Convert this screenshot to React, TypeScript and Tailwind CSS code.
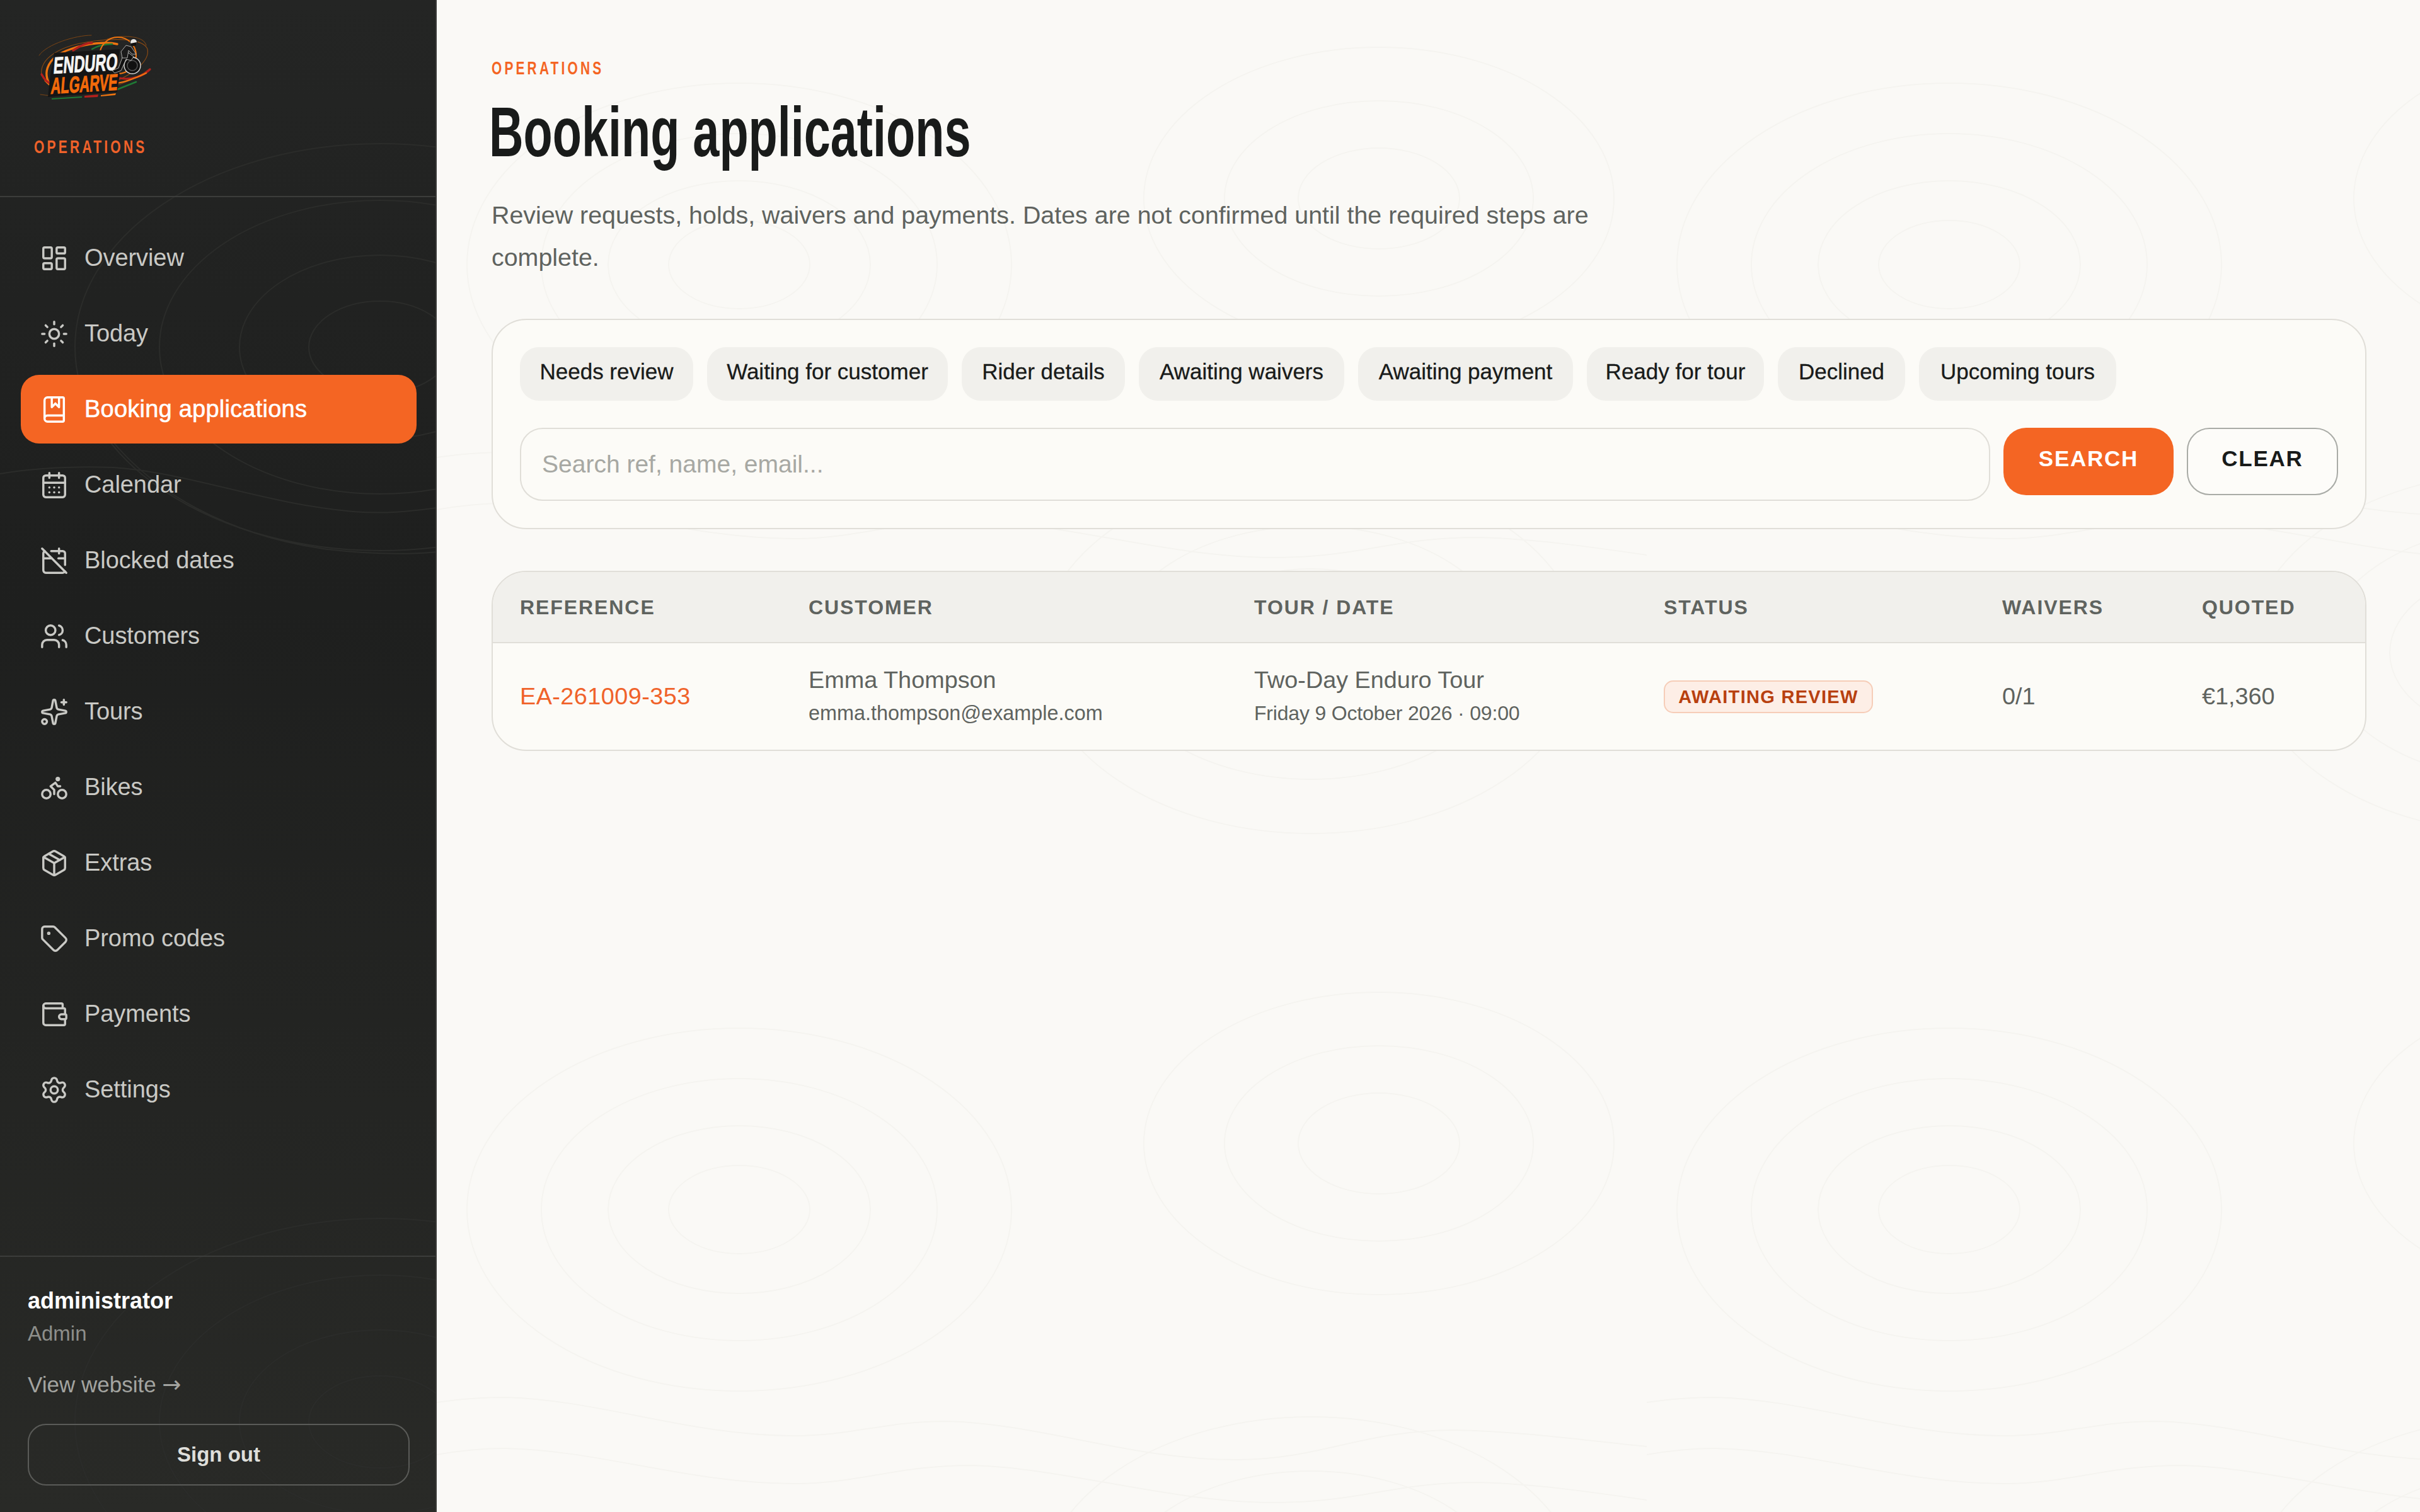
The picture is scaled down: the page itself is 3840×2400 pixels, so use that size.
import React from "react";
import { LayoutDashboard, Sun, BookMarked, CalendarDays, CalendarOff, Users, Sparkles, Bike, Package, Tag, Wallet, Settings } from "lucide-react";

const nav = [
  { label: "Overview", Icon: LayoutDashboard },
  { label: "Today", Icon: Sun },
  { label: "Booking applications", Icon: BookMarked, active: true },
  { label: "Calendar", Icon: CalendarDays },
  { label: "Blocked dates", Icon: CalendarOff },
  { label: "Customers", Icon: Users },
  { label: "Tours", Icon: Sparkles },
  { label: "Bikes", Icon: Bike },
  { label: "Extras", Icon: Package },
  { label: "Promo codes", Icon: Tag },
  { label: "Payments", Icon: Wallet },
  { label: "Settings", Icon: Settings },
];

const chips = [
  { label: "Needs review", w: "w-[275px]" },
  { label: "Waiting for customer", w: "w-[382px]" },
  { label: "Rider details", w: "w-[259px]" },
  { label: "Awaiting waivers", w: "w-[326px]" },
  { label: "Awaiting payment", w: "w-[341px]" },
  { label: "Ready for tour", w: "w-[281px]" },
  { label: "Declined", w: "w-[202px]" },
  { label: "Upcoming tours", w: "w-[313px]" },
];

function Rings({ cx, cy, radii }: { cx: number; cy: number; radii: number[][] }) {
  return (
    <>
      {radii.map(([rx, ry]) => (
        <ellipse key={rx} cx={cx} cy={cy} rx={rx} ry={ry} />
      ))}
    </>
  );
}

function MainPattern() {
  return (
    <svg className="absolute inset-0 w-full h-full pointer-events-none" aria-hidden="true">
      <defs>
        <pattern id="contour" width="1920" height="1500" patternUnits="userSpaceOnUse">
          <g fill="none" stroke="#f5f4f0" strokeWidth="2">
            <Rings cx={480} cy={420} radii={[[432, 288], [314, 208], [208, 133], [112, 70]]} />
            <Rings cx={1495} cy={315} radii={[[373, 240], [245, 155], [128, 80]]} />
            <Rings cx={1387} cy={1036} radii={[[432, 287], [314, 201], [208, 133], [112, 70]]} />
            <path d="M0 726 C40 720 70 718 109 718 C260 722 400 779 568 779 C660 779 710 756 810 756 C960 760 1100 817 1270 817 C1400 817 1470 770 1614 770 C1720 772 1810 785 1920 796" />
            <path d="M0 809 C40 802 70 799 109 799 C260 802 400 855 568 855 C670 855 730 826 849 826 C1000 830 1160 885 1333 885 C1460 885 1520 853 1652 853 C1740 855 1830 868 1920 881" />
          </g>
        </pattern>
      </defs>
      <rect width="100%" height="100%" fill="url(#contour)" />
    </svg>
  );
}

function SidebarPattern() {
  return (
    <svg className="absolute inset-0 w-full h-full pointer-events-none" aria-hidden="true">
      <g fill="none" stroke="#2b2c2a" strokeWidth="2">
        <Rings cx={603} cy={551} radii={[[484, 323], [350, 233], [223, 146], [113, 73]]} />
        <Rings cx={603} cy={2257} radii={[[484, 323], [350, 233], [223, 146], [113, 73]]} />
        <path d="M0 752 C60 742 120 740 180 742 C300 750 420 800 560 812 C610 816 650 812 693 806" />
        <path d="M170 690 C240 780 360 850 520 872 C590 880 650 880 693 876" />
      </g>
    </svg>
  );
}

function Logo() {
  return (
    <svg viewBox="40 40 220 130" className="w-[220px] h-[130px] block" aria-label="Enduro Algarve">
      <g fill="none" strokeLinecap="round">
        <path d="M66 120 C62 94 92 72 150 65 C190 60 228 62 234 78 C238 96 212 118 180 130" stroke="#8a4a14" strokeWidth="1.2" />
        <path d="M62 88 C74 70 120 56 145 56" stroke="#7a4415" strokeWidth="1" />
        <path d="M170 62 C200 54 228 58 232 72" stroke="#7a4415" strokeWidth="1.2" />
        <path d="M64 150 C110 158 200 140 236 110" stroke="#7a4415" strokeWidth="1" />
        <path d="M84 140 C66 122 70 92 112 78 C140 68 170 66 186 70" stroke="#ee7410" strokeWidth="3.4" />
        <path d="M72 128 C88 146 104 144 120 146" stroke="#ee7410" strokeWidth="3" />
        <path d="M66 118 C70 126 76 132 84 134" stroke="#b3201c" strokeWidth="3.4" />
        <path d="M116 80 C128 72 138 68 146 68" stroke="#b3201c" strokeWidth="3.4" />
        <path d="M146 78 C156 72 166 70 178 70" stroke="#1f7a35" strokeWidth="2.4" />
        <circle cx="187" cy="88" r="29" stroke="#ee7410" strokeWidth="2.2" />
        <path d="M190 124 C210 128 228 120 238 110" stroke="#b3201c" strokeWidth="3.2" />
        <path d="M186 132 C200 130 215 124 232 116" stroke="#ee7410" strokeWidth="2.4" />
        <path d="M186 142 C196 138 206 134 216 130" stroke="#1f7a35" strokeWidth="2.6" />
      </g>
      <path d="M80 118 L86 84 L190 78 L186 108 L190 118 L186 146 L76 154 Z" fill="#151515" />
      <text transform="translate(84 117) rotate(-3.5) skewX(-8)" textLength="102" lengthAdjust="spacingAndGlyphs" fontFamily="'Liberation Sans', sans-serif" fontWeight="700" fontSize="37" fill="#f4f4f2" stroke="#f4f4f2" strokeWidth="0.9">ENDURO</text>
      <text transform="translate(80 149) rotate(-3.5) skewX(-8)" textLength="106" lengthAdjust="spacingAndGlyphs" fontFamily="'Liberation Sans', sans-serif" fontWeight="700" fontSize="36" fill="#f26a0a" stroke="#f26a0a" strokeWidth="1.1">ALGARVE</text>
      <path d="M82 156 L130 153 L130 155 L82 158 Z" fill="#1f7a35" />
      <path d="M134 152 L156 150 L155 154 L134 155 Z" fill="#b3201c" />
      <path d="M160 151 L184 148 L183 151 L160 153 Z" fill="#ee7410" />
      <g>
        <circle cx="210" cy="104" r="13" fill="#111" stroke="#d8d8d6" strokeWidth="1.4" />
        <circle cx="210" cy="104" r="8" fill="none" stroke="#555" strokeWidth="1.4" />
        <path d="M178 112 L188 108 L196 86 L204 84 L212 90 L208 96 L200 94 L192 112 L182 116 Z" fill="#111" stroke="#d0d0ce" strokeWidth="0.8" />
        <path d="M192 82 L200 72 L208 74 L216 86 L210 86 L204 80 L202 92 L194 92 Z" fill="#1b1b1b" stroke="#cfcfcd" strokeWidth="0.8" />
        <circle cx="212" cy="67" r="5.5" fill="#e6e6e4" stroke="#111" strokeWidth="1" />
        <path d="M207 69 L217 67 L216 72 L209 73 Z" fill="#111" />
      </g>
    </svg>
  );
}

export default function App() {
  return (
    <div className="w-[3840px] h-[2400px] flex overflow-hidden font-['Liberation_Sans',Arial,sans-serif] bg-[#faf9f6]">
      <aside className="relative w-[693px] h-full shrink-0 flex flex-col border-r-2 border-[#3a3a38] bg-linear-to-b from-[#242524] via-[#1e1f1e] via-40% to-[#292a27]">
        <SidebarPattern />
        <div className="relative h-[313px] shrink-0 border-b-2 border-[#3c3d3b] pt-[40px] pl-[40px]">
          <Logo />
          <div className="ml-[14px] mt-[43px] origin-left scale-x-[0.725] whitespace-nowrap text-[#f0622a] font-bold text-[29px] leading-[40px] tracking-[0.2em]">OPERATIONS</div>
        </div>
        <nav className="relative flex-1 pl-[33px] pr-[30px] pt-[42px] flex flex-col gap-[11px]">
          {nav.map(({ label, Icon, active }) => (
            <a key={label} className={`h-[109px] rounded-[29px] pl-[30px] flex items-center gap-[25px] text-[38px] ${active ? "bg-[#f46523] text-white tracking-[0.006em] [-webkit-text-stroke:0.6px_white]" : "text-[#c9c9c5] tracking-[-0.002em]"}`}>
              <Icon size={46} strokeWidth={1.8} className="shrink-0" />
              <span>{label}</span>
            </a>
          ))}
        </nav>
        <div className="relative border-t-2 border-[#3c3d3b] h-[407px] shrink-0 px-[44px] pt-[45px]">
          <div className="text-white font-bold text-[36px] leading-[50px]">administrator</div>
          <div className="text-[#8d8e8a] text-[33px] leading-[46px] mt-[4px]">Admin</div>
          <div className="text-[#a3a4a0] text-[35px] leading-[50px] mt-[33px]">View website <span className="font-['DejaVu_Sans',sans-serif] text-[36px]">→</span></div>
          <button className="mt-[37px] w-[606px] h-[98px] rounded-[29px] border-2 border-[#5a5b58] text-[#dededa] font-bold text-[33px]">Sign out</button>
        </div>
      </aside>
      <main className="relative flex-1 h-full pl-[87px] pr-[85px]">
        <MainPattern />
        <div className="relative">
          <div className="pt-[88px] origin-left scale-x-[0.72] whitespace-nowrap text-[#f46523] font-bold text-[29px] leading-[40px] tracking-[0.2em]">OPERATIONS</div>
          <h1 className="mt-[12px] -ml-[4px] origin-left scale-x-[0.675] whitespace-nowrap text-[#191b1a] font-bold text-[112px] leading-[140px]">Booking applications</h1>
          <p className="mt-[28px] max-w-[1790px] text-[#5f635f] text-[39.4px] leading-[67px]">Review requests, holds, waivers and payments. Dates are not confirmed until the required steps are complete.</p>
          <section className="mt-[64px] h-[334px] rounded-[55px] border-[2.4px] border-[#e0ded8] bg-[#fcfbf7] p-[43px]">
            <div className="flex gap-[22px]">
              {chips.map((c) => (
                <span key={c.label} className={`${c.w} h-[85px] rounded-[30px] bg-[#f1f0ec] text-[#191b1a] text-[35px] [-webkit-text-stroke:0.3px_#191b1a] flex items-center justify-center pb-[6px] whitespace-nowrap`}>{c.label}</span>
              ))}
            </div>
            <div className="mt-[43px] flex items-start gap-[21px]">
              <input readOnly placeholder="Search ref, name, email..." className="flex-1 h-[116px] rounded-[36px] border-[2.4px] border-[#e0ded8] bg-[#fcfbf7] px-[33px] text-[39px] outline-none placeholder:text-[#a7a8a3]" />
              <button className="w-[270px] h-[107px] rounded-[36px] bg-[#f46523] text-white font-bold text-[35px] tracking-[0.05em] pb-[8px]">SEARCH</button>
              <button className="w-[240px] h-[107px] rounded-[36px] border-[2.4px] border-[#a9aba6] bg-[#fdfcf9] text-[#191b1a] font-bold text-[35px] tracking-[0.05em] pb-[8px]">CLEAR</button>
            </div>
          </section>
          <section className="mt-[66px] h-[286px] rounded-[55px] border-[2.4px] border-[#e0ded8] bg-[#fcfbf7] overflow-hidden">
            <div className="h-[113px] bg-[#f1f0ec] border-b-[2.4px] border-[#e0ded8] px-[43px] grid grid-cols-[458px_707px_650px_537px_317px_1fr] items-center text-[#5f635f] font-bold text-[32px] tracking-[0.06em]">
              <div>REFERENCE</div>
              <div>CUSTOMER</div>
              <div>TOUR / DATE</div>
              <div>STATUS</div>
              <div>WAIVERS</div>
              <div>QUOTED</div>
            </div>
            <div className="h-[168px] px-[43px] grid grid-cols-[458px_707px_650px_537px_317px_1fr] items-center text-[#5f635f] text-[37.8px]">
              <div className="text-[#f0622a] tracking-[0.012em]">EA-261009-353</div>
              <div>
                <div className="leading-[52px]">Emma Thompson</div>
                <div className="text-[32.4px] leading-[52px] mt-[1px]">emma.thompson@example.com</div>
              </div>
              <div>
                <div className="leading-[52px]">Two-Day Enduro Tour</div>
                <div className="text-[32px] tracking-[-0.006em] leading-[52px] mt-[1px]">Friday 9 October 2026 · 09:00</div>
              </div>
              <div className="-mt-[3px]">
                <span className="inline-flex h-[52px] w-[332px] items-center justify-center rounded-[15px] border-[2.4px] border-[#f6cdb8] bg-[#fdeee6] text-[#b8400f] font-bold text-[29px] tracking-[0.045em]">AWAITING REVIEW</span>
              </div>
              <div>0/1</div>
              <div>€1,360</div>
            </div>
          </section>
        </div>
      </main>
    </div>
  );
}
